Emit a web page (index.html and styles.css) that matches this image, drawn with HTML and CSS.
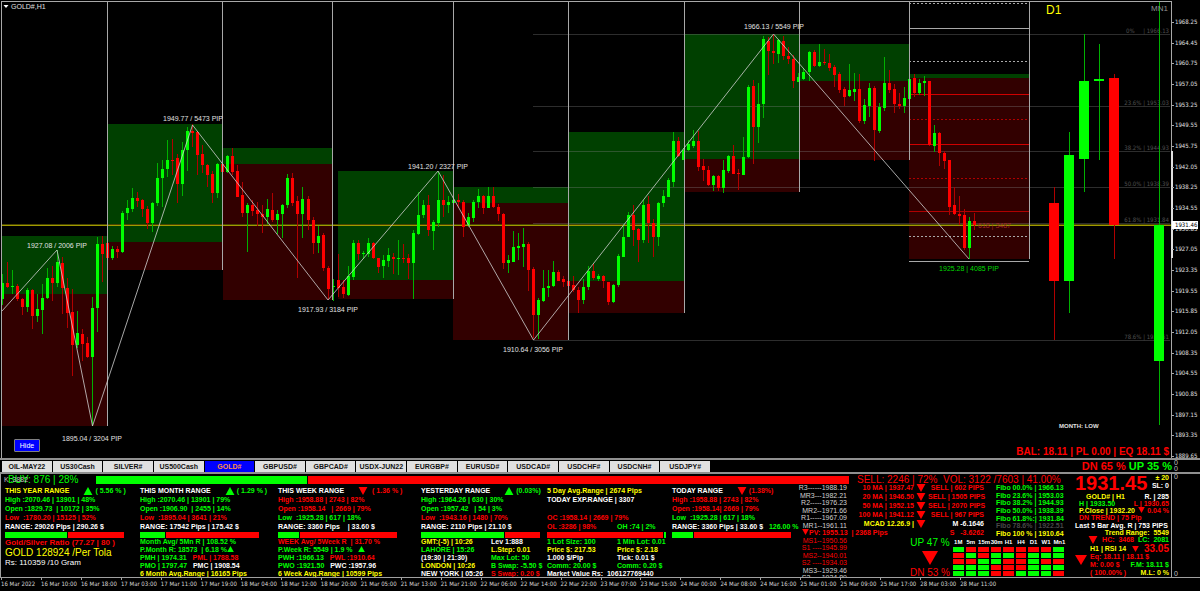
FILE: index.html
```html
<!DOCTYPE html>
<html lang="en">
<head>
<meta charset="UTF-8">
<meta name="viewport" content="width=device-width, initial-scale=1.0">
<title>GOLD#,H1</title>
<link rel="stylesheet" href="styles.css">
</head>
<body>

<main class="chart">
    <svg id="chart" class="chart-svg" viewBox="0 0 1200 458" role="img" aria-label="GOLD# H1 chart"></svg>
    <button type="button" class="hide-btn">Hide</button>
</main>

<nav class="tabbar">
    <div class="tabs">
        <button type="button">OIL-MAY22</button>
        <button type="button">US30Cash</button>
        <button type="button">SILVER#</button>
        <button type="button">US500Cash</button>
        <button type="button" class="active">GOLD#</button>
        <button type="button">GBPUSD#</button>
        <button type="button">GBPCAD#</button>
        <button type="button">USDX-JUN22</button>
        <button type="button">EURGBP#</button>
        <button type="button">EURUSD#</button>
        <button type="button">USDCAD#</button>
        <button type="button">USDCHF#</button>
        <button type="button">USDCNH#</button>
        <button type="button">USDJPY#</button>
    </div>
    <div class="trend"><span class="r">DN 65 %</span> <span class="g">UP 35 %</span></div>
    <div class="scale"><span>0</span><span>0</span></div>
</nav>

<section class="panel">
    <div class="stats">
        <div class="volume">
            <span class="buy g">BUY: 876 | 28%<small>K :3882</small></span>
            <div class="bar"><i class="up" style="width:28%"></i><i class="down"></i></div>
            <span class="sell r">SELL: 2246 | 72%&nbsp; VOL: 3122 /7603 | 41.00%</span>
        </div>
        <div class="columns">
            <div class="col">
                <div class="title y">THIS YEAR RANGE <svg class="tri" viewBox="0 0 10 9"><path d="M5 0L10 9H0z"/></svg><span class="g">( 5.56 % )</span></div>
                <div class="g">High :2070.46 | 13901 | 48%</div>
                <div class="g">Open :1829.73 &nbsp;| 10172 | 35%</div>
                <div class="r">Low &nbsp;:1780.20 | 15125 | 52%</div>
                <div class="w">RANGE: 29026 Pips | 290.26 $</div>
                <div class="bar"><i class="up" style="width:52%"></i><i class="down"></i></div>
                <div class="ratio r">Gold/Silver Ratio (77.27 | 80 )</div>
                <div class="tola y">GOLD 128924 /Per Tola</div>
                <div class="gram w">Rs: 110359 /10 Gram</div>
            </div>
            <div class="col">
                <div class="title w">THIS MONTH RANGE <svg class="tri" viewBox="0 0 10 9"><path d="M5 0L10 9H0z"/></svg><span class="g">( 1.29 % )</span></div>
                <div class="g">High :2070.46 | 13901 | 79%</div>
                <div class="g">Open :1906.90 &nbsp;| 2455 | 14%</div>
                <div class="r">Low &nbsp;:1895.04 | 3641 | 21%</div>
                <div class="w">RANGE: 17542 Pips | 175.42 $</div>
                <div class="bar"><i class="up" style="width:21%"></i><i class="down"></i></div>
                <div class="lines">
                    <div class="g">Month Avg/ 5Mn R | 108.52 %</div>
                    <div class="g">P.Month R: 18573 &nbsp;| 6.18 %<svg class="tri small" viewBox="0 0 10 9"><path d="M5 0L10 9H0z"/></svg></div>
                    <div class="g">PMH | 1974.31 &nbsp;&nbsp;<span class="r">PML | 1788.58</span></div>
                    <div class="g">PMO | 1797.47 &nbsp;&nbsp;<span class="w">PMC | 1908.54</span></div>
                    <div class="y">6 Month Avg.Range | 16165 Pips</div>
                </div>
            </div>
            <div class="col">
                <div class="title w">THIS WEEK RANGE <svg class="tri dn" viewBox="0 0 10 9"><path d="M0 0H10L5 9z"/></svg><span class="r">&nbsp;( 1.36 % )</span></div>
                <div class="r">High :1958.88 | 2743 | 82%</div>
                <div class="r">Open :1958.14 &nbsp;&nbsp;| 2669 | 79%</div>
                <div class="g">Low &nbsp;:1925.28 | 617 | 18%</div>
                <div class="w">RANGE: 3360 Pips &nbsp;&nbsp;&nbsp;| 33.60 $</div>
                <div class="bar"><i class="up" style="width:18%"></i><i class="down"></i></div>
                <div class="lines">
                    <div class="r">WEEK Avg/ 5Week R &nbsp;| 31.70 %</div>
                    <div class="g">P.Week R: 5549 | 1.9 % &nbsp;&nbsp;<svg class="tri small" viewBox="0 0 10 9"><path d="M5 0L10 9H0z"/></svg></div>
                    <div class="g">PWH :1966.13 &nbsp;&nbsp;<span class="r">PWL :1910.64</span></div>
                    <div class="g">PWO :1921.50 &nbsp;&nbsp;<span class="w">PWC :1957.96</span></div>
                    <div class="y">6 Week Avg.Range | 10599 Pips</div>
                </div>
            </div>
            <div class="col">
                <div class="title w">YESTERDAY RANGE <svg class="tri" viewBox="0 0 10 9"><path d="M5 0L10 9H0z"/></svg><span class="g">(0.03%)</span></div>
                <div class="g">High :1964.26 | 630 | 30%</div>
                <div class="g">Open :1957.42 &nbsp;&nbsp;| 54 | 3%</div>
                <div class="r">Low &nbsp;:1943.16 | 1480 | 70%</div>
                <div class="w">RANGE: 2110 Pips | 21.10 $</div>
                <div class="bar"><i class="up" style="width:70%"></i><i class="down"></i></div>
                <div class="lines split">
                    <div><span class="y">GMT:(-5) | 10:26</span><span class="w">Lev 1:888</span></div>
                    <div><span class="g">LAHORE | 15:26</span><span class="y">L.Step: 0.01</span></div>
                    <div><span class="w">(19:30 | 21:30)</span><span class="g">Max Lot: 50</span></div>
                    <div><span class="y">LONDON | 10:26</span><span class="g">B Swap: -5.50 $</span></div>
                    <div><span class="w">NEW YORK | 05:26</span><span class="r">S Swap: 0.20 $</span></div>
                </div>
            </div>
            <div class="col">
                <div class="y">5 Day Avg.Range | 2674 Pips</div>
                <div class="w">TODAY EXP.RANGE | 3307</div>
                <div>&nbsp;</div>
                <div class="r">OC :1958.14 | 2669 | 79%</div>
                <div class="pair"><span class="r">OL :3286 | 98%</span><span class="g">OH :74 | 2%</span></div>
                <div class="bar"><i class="down"></i><i class="up" style="width:2%"></i></div>
                <div class="lines split">
                    <div><span class="g">1 Lot Size: 100</span><span class="g">1 Min Lot: 0.01</span></div>
                    <div><span class="y">Price $: 217.53</span><span class="y">Price $: 2.18</span></div>
                    <div><span class="w">1.000 $/Pip</span><span class="w">Tick: 0.01 $</span></div>
                    <div><span class="g">Comm: 20.00 $</span><span class="g">Comm: 0.20 $</span></div>
                    <div class="w">Market Value Rs: &nbsp;106127769440</div>
                </div>
            </div>
            <div class="col">
                <div class="title w">TODAY RANGE <svg class="tri dn" viewBox="0 0 10 9"><path d="M0 0H10L5 9z"/></svg><span class="r">(1.38%)</span></div>
                <div class="r">High :1958.88 | 2743 | 82%</div>
                <div class="r">Open :1958.14| 2669 | 79%</div>
                <div class="g">Low &nbsp;:1925.28 | 617 | 18%</div>
                <div class="w">RANGE: 3360 Pips | 33.60 $ &nbsp;&nbsp;<span class="g">126.00 %</span></div>
                <div class="bar"><i class="up" style="width:18%"></i><i class="down"></i></div>
            </div>
            <div class="pivots">
                <div>R3------1988.19</div>
                <div>MR3---1982.21</div>
                <div>R2-----1976.23</div>
                <div>MR2--1971.66</div>
                <div>R1-----1967.09</div>
                <div>MR1--1961.11</div>
                <div class="pv"><svg class="tri dn small" viewBox="0 0 10 9"><path d="M0 0H10L5 9z"/></svg>PV: 1955.13 &nbsp;| 2368 Pips</div>
                <div class="r">MS1--1950.56</div>
                <div class="r">S1 ----1945.99</div>
                <div class="r">MS2--1940.01</div>
                <div class="r">S2 ----1934.03</div>
                <div>MS3--1929.46</div>
                <div>S3 ----1924.89</div>
            </div>
            <div class="signals">
                <div class="averages">
                    <div class="ma">
                        <span>10 MA | 1937.47</span><svg class="tri dn" viewBox="0 0 10 9"><path d="M0 0H10L5 9z"/></svg><span>SELL | 602 PIPS</span>
                        <span>20 MA | 1946.50</span><svg class="tri dn" viewBox="0 0 10 9"><path d="M0 0H10L5 9z"/></svg><span>SELL | 1505 PIPS</span>
                        <span>50 MA | 1952.15</span><svg class="tri dn" viewBox="0 0 10 9"><path d="M0 0H10L5 9z"/></svg><span>SELL | 2070 PIPS</span>
                        <span>100 MA | 1941.12</span><svg class="tri dn" viewBox="0 0 10 9"><path d="M0 0H10L5 9z"/></svg><span>SELL | 967 PIPS</span>
                        <span class="y">MCAD 12.26.9 |</span><svg class="tri dn" viewBox="0 0 10 9"><path d="M0 0H10L5 9z"/></svg><span class="w">M -6.1646</span>
                        <span></span><span></span><span>S &nbsp;&nbsp;-3.6262</span>
                    </div>
                    <div class="fibo">
                        <div>Fibo 00.0% | 1966.13</div>
                        <div>Fibo 23.6% | 1953.03</div>
                        <div>Fibo 38.2% | 1944.93</div>
                        <div>Fibo 50.0% | 1938.39</div>
                        <div>Fibo 61.8%:| 1931.84</div>
                        <div class="dim">Fibo 78.6% | 1922.51</div>
                        <div class="y">Fibo 100 % | 1910.64</div>
                    </div>
                </div>
                <div class="strength">
                    <div class="updn">
                        <span class="g">UP 47 %</span>
                        <svg class="tri dn large" viewBox="0 0 16 14"><path d="M0 0H16L8 14z"/></svg>
                        <span class="r">DN 53 %</span>
                    </div>
                    <table class="heat">
                        <thead><tr><th>1M</th><th>5m</th><th>15m</th><th>30m</th><th>H1</th><th>H4</th><th>D1</th><th>W1</th><th>Mn1</th></tr></thead>
                        <tbody id="heat"></tbody>
                    </table>
                </div>
            </div>
        </div>
    </div>
    <aside class="quote">
        <div class="price"><strong>1931.45</strong><div><span class="y">&#177; 20</span><span class="w">SL: 0</span></div></div>
        <div class="rows">
            <div class="w"><span class="y in2">GOLD# | H1</span><span>R. | 285</span></div>
            <div><span class="g in1">H | 1933.50</span><span class="r">L | 1930.65</span></div>
            <div><span class="y in1">P.Close | 1932.20</span><svg class="tri dn small" viewBox="0 0 10 9"><path d="M0 0H10L5 9z"/></svg><span class="r">0.04 %</span></div>
            <div><span class="r in1">DN TREND | 75 Pip</span></div>
            <div><span class="w">Last 5 Bar Avg. R | 753 PIPS</span></div>
            <div class="end"><span class="y">Trend Range: &nbsp;5549</span></div>
            <div class="end"><svg class="tri dn" viewBox="0 0 10 9"><path d="M0 0H10L5 9z"/></svg><span class="r">HC: &nbsp;3468 &nbsp;</span><span class="g">LC: &nbsp;2081</span></div>
        </div>
        <div class="account">
            <svg class="tri dn wide" viewBox="0 0 12 10"><path d="M0 0H12L6 10z"/></svg>
            <div class="rsi"><span class="y">H1 | RSI 14</span><svg class="tri dn small" viewBox="0 0 10 9"><path d="M0 0H10L5 9z"/></svg><b class="r">33.05</b></div>
            <div class="r">Eq: 18.11 | 18.11 $</div>
            <div><span class="r">M: 0.00 $</span><span class="g">F.M: 18.11 $</span></div>
            <div><span class="r">( 100.00% )</span><span class="y">M.L: 0 %</span></div>
        </div>
    </aside>
    <div class="scale"><span>0</span><span>0</span></div>
</section>

<footer class="timeline" id="timeline"></footer>

<script src="script.js"></script>
</body>
</html>
```
FILE: styles.css
```css
body {
    margin: 0;
    background-color: #000;
    color: #fff;
    font-family: "Liberation Sans", Arial, sans-serif;
    font-size: 7px;
    font-weight: bold;
    overflow-x: hidden;
}
.g { color: #00ff00; }
.r { color: #ff0000; }
.y { color: #ffff00; }
.w { color: #fff; }
.dim { color: #404040; }

/* Chart */
.chart {
    position: relative;
}
.chart-svg {
    display: block;
    width: 100%;
    height: auto;
}
.chart-svg text {
    font-size: 7px;
    font-weight: normal;
    fill: #e0e0e0;
}
.chart-svg .axis {
    font-family: "DejaVu Sans Condensed", "DejaVu Sans", sans-serif;
    font-size: 6px;
}
.chart-svg .fib {
    fill: #505050;
}
.chart-svg .low {
    fill: #00d800;
}
.chart-svg .target {
    fill: #a02828;
}
.chart-svg .month {
    font-size: 6px;
    font-weight: bold;
}
.chart-svg .current {
    fill: #000;
}
.chart-svg .day {
    font-size: 12px;
    fill: #ffff00;
}
.chart-svg .mn {
    font-size: 8px;
    fill: #909090;
}
.chart-svg .balance {
    font-size: 10px;
    font-weight: bold;
    fill: #ff0000;
}
.hide-btn {
    position: absolute;
    left: 14px;
    bottom: 6px;
    width: 26px;
    height: 13px;
    padding: 0;
    border: 1px solid #808080;
    border-radius: 1px;
    background-color: #0000ff;
    color: #fff;
    font: 7px "Liberation Sans", Arial, sans-serif;
}

/* Symbol tabs */
.tabbar {
    display: flex;
    align-items: center;
    height: 12px;
    border-top: 2px solid #909090;
    border-bottom: 2px solid #909090;
}
.tabs {
    display: flex;
    flex: 0 0 59%;
    gap: 1px;
    margin-left: 2px;
}
.tabs button {
    flex: 1 1 0;
    min-width: 0;
    height: 11px;
    padding: 0;
    border: 0;
    background-color: #e0e0e0;
    color: #111;
    font: bold 7px "Liberation Sans", Arial, sans-serif;
}
.tabs .active {
    background-color: #0000ff;
    color: #ff9040;
}
.trend {
    flex: 1;
    text-align: right;
    font-size: 11px;
    line-height: 12px;
    white-space: nowrap;
}
.scale {
    display: flex;
    flex-direction: column;
    justify-content: space-between;
    flex: 0 0 26px;
    padding-left: 2px;
    line-height: 6px;
    font-weight: normal;
    color: #c0c0c0;
}

/* Info panel */
.panel {
    display: flex;
    height: 103px;
    border-bottom: 1px solid #a0a0a0;
    line-height: 9px;
    white-space: nowrap;
    overflow: hidden;
}
.stats {
    flex: 1;
    min-width: 0;
    display: flex;
    flex-direction: column;
    border-left: 1px solid #a0a0a0;
}
.volume {
    display: flex;
    align-items: center;
    height: 12px;
    font-size: 10px;
    font-weight: normal;
    line-height: 10px;
}
.buy {
    position: relative;
    flex: 0 0 88px;
    padding-left: 7px;
}
.buy small {
    position: absolute;
    left: 3px;
    top: 0;
    font-size: 7px;
    color: #c0c0c0;
}
.volume .bar {
    flex: 1;
    width: auto;
    height: 8px;
    margin: 0;
}
.sell {
    flex: 0 0 218px;
    padding-left: 8px;
}
.bar {
    display: flex;
    gap: 1px;
    width: 119px;
    height: 6px;
    margin-top: 1px;
}
.bar .up {
    background-color: #00ff00;
}
.bar .down {
    flex: 1;
    background-color: #ff0000;
}
.columns {
    flex: 1;
    min-height: 0;
    display: grid;
    grid-template-columns: 135fr 138fr 143fr 126fr 125fr 130fr 48fr 220fr;
    padding: 0 5px 0 4px;
}
.col {
    display: flex;
    flex-direction: column;
    min-width: 0;
}
.title {
    display: flex;
    align-items: center;
}
.title .tri {
    margin: 0 2px 0 14px;
}
.tri {
    width: 10px;
    height: 8px;
    fill: #00ff00;
}
.tri.dn { fill: #ff0000; }
.tri.small {
    width: 7px;
    height: 6px;
}
.tri.wide {
    width: 12px;
    height: 10px;
}
.tri.large {
    width: 16px;
    height: 14px;
}
.ratio {
    font-size: 8px;
}
.tola {
    font-size: 10px;
    font-weight: normal;
    line-height: 11px;
}
.gram {
    font-size: 8px;
    font-weight: normal;
}
.lines {
    flex: 1;
    display: flex;
    flex-direction: column;
    justify-content: space-between;
    line-height: 8px;
}
.lines.split > div,
.pair {
    display: flex;
}
.lines.split span:first-child,
.pair span:first-child {
    flex: 0 0 70px;
}
.pivots {
    display: flex;
    flex-direction: column;
    justify-content: space-between;
    align-items: flex-end;
    min-width: 0;
    margin: -2px 3px -3px 0;
    line-height: 7px;
    font-weight: normal;
    color: #d0d0d0;
}
.pivots .pv {
    align-self: flex-start;
    width: 0;
    font-weight: bold;
    color: #ff0000;
}

/* Moving averages, fibo levels, timeframe strength */
.signals {
    display: flex;
    flex-direction: column;
    justify-content: space-between;
    margin-top: -2px;
}
.averages {
    display: flex;
    justify-content: space-between;
    padding-right: 6px;
}
.ma {
    display: grid;
    grid-template-columns: 64px 10px 56px;
    column-gap: 2px;
    grid-auto-rows: 8px;
    row-gap: 1px;
    align-items: center;
    text-align: right;
    line-height: 8px;
    color: #ff0000;
}
.fibo {
    display: flex;
    flex-direction: column;
    justify-content: space-between;
    line-height: 7px;
    color: #00ff00;
}
.fibo .dim { color: #484848; }
.fibo .y { color: #ffff00; }
.strength {
    display: flex;
    justify-content: flex-end;
    gap: 1px;
    padding: 0 4px 1px 0;
}
.updn {
    display: flex;
    flex-direction: column;
    align-items: center;
    justify-content: space-between;
    font-size: 10px;
    font-weight: normal;
}
.heat {
    border-collapse: separate;
    border-spacing: 2px 1px;
    table-layout: fixed;
    width: 115px;
}
.heat th {
    padding: 0;
    font-size: 6px;
    line-height: 7px;
    overflow: visible;
}
.heat td {
    height: 5px;
    padding: 0;
    background-color: #ff0000;
}
.heat td.up {
    background-color: #00ff00;
}

/* Quote block */
.quote {
    flex: 0 0 94px;
    display: flex;
    flex-direction: column;
    justify-content: space-between;
    padding-right: 2px;
    border-right: 1px solid #a0a0a0;
}
.price {
    display: flex;
    justify-content: space-between;
    color: #ff0000;
}
.price strong {
    font-size: 20px;
    line-height: 18px;
}
.price div {
    display: flex;
    flex-direction: column;
    align-items: flex-end;
    line-height: 8px;
}
.rows {
    display: flex;
    flex-direction: column;
    justify-content: space-between;
    height: 51px;
}
.rows div,
.account div {
    display: flex;
    justify-content: space-between;
    line-height: 7px;
}
.rows .end {
    justify-content: flex-end;
}
.rows .end .tri {
    margin-right: 4px;
}
.in1 { padding-left: 4px; }
.in2 { padding-left: 11px; }
.account {
    position: relative;
    padding-left: 15px;
}
.account div {
    line-height: 8px;
}
.account .rsi {
    align-items: center;
}
.account b {
    font-size: 10px;
}
.account .wide {
    position: absolute;
    left: 0;
    bottom: 12px;
}

/* Time axis */
.timeline {
    display: grid;
    grid-template-columns: repeat(30, minmax(0, 1fr));
    height: 13px;
    padding-left: 1px;
    overflow: hidden;
    font-family: "DejaVu Sans Condensed", "DejaVu Sans", sans-serif;
    font-size: 6px;
    font-weight: normal;
    line-height: 8px;
    color: #d8d8d8;
    white-space: nowrap;
}
.timeline span::before {
    content: "";
    display: block;
    width: 1px;
    height: 2px;
    background-color: #a0a0a0;
}
```
FILE: script.js
```js
const NS = 'http://www.w3.org/2000/svg';
const chart = document.getElementById('chart');

const UP = '#00ff00';
const DOWN = '#ff0000';
const LINE = '#a8a8a8';

function add(tag, attrs, text) {
    const el = document.createElementNS(NS, tag);
    for (const key in attrs) el.setAttribute(key, attrs[key]);
    if (text) el.textContent = text;
    chart.appendChild(el);
}

function rect(x, y, w, h, fill) {
    add('rect', { x, y, width: w, height: h, fill });
}

function label(x, y, text, cls, anchor) {
    add('text', { x, y, class: cls || '', 'text-anchor': anchor || 'start' }, text);
}

// daily ranges: left, right, high, open, low
const days = [
    [2, 107, 236, 294, 426], [108, 222, 124, 242, 270], [223, 332, 148, 164, 300],
    [338, 453, 171, 280, 299], [453, 568, 187, 203, 340], [569, 684, 132, 281, 313],
    [684, 799, 34, 159, 192], [799, 909, 44, 81, 160], [909, 1029, 74, 78, 259]
];
days.forEach(([x1, x2, top, mid, bottom]) => {
    rect(x1, top, x2 - x1, mid - top, '#004000');
    rect(x1, mid, x2 - x1, bottom - mid, '#320000');
});

// fibo levels
const fibs = [
    [34, '0%\u00a0\u00a0\u00a0\u00a0\u00a0| 1966.13'], [106, '23.6% | 1953.03'], [151, '38.2% | 1944.93'],
    [187, '50.0% | 1938.39'], [223, '61.8% | 1931.84'], [340, '78.6% | 1922.51']
];
fibs.forEach(([y, text]) => {
    add('rect', { x: 533, y, width: 637, height: 1, fill: '#808080', 'fill-opacity': 0.35 });
    label(1169, y - 1, text, 'axis fib', 'end');
});

// pivot levels of the last day: y, colour, dashed
const levels = [
    [3, LINE, 1], [28, LINE, 0], [61, LINE, 1], [94, '#d00000', 0], [119, '#b00000', 1],
    [144, '#d00000', 0], [178, '#b00000', 1], [211, '#b00000', 0], [236, LINE, 1], [261, LINE, 0]
];
levels.forEach(([y, stroke, dashed]) => {
    add('path', { d: `M909 ${y + 0.5}H1029`, stroke, 'stroke-dasharray': dashed ? '2 2' : 'none' });
});

rect(2, 224, 1169, 1, '#4a4600');
rect(2, 225, 1169, 1, '#a09a00');

// candles: high, low, body top, body bottom, up
const candles = [
    [274,305,283,299,1],[262,288,283,287,0],[270,294,286,287,1],[284,301,286,299,0],[298,315,299,307,0],
    [288,312,290,307,1],[289,329,290,316,0],[294,322,309,316,1],[284,334,298,310,1],[268,299,278,298,1],
    [266,301,278,283,0],[250,287,262,283,1],[257,314,263,288,0],[278,328,288,313,0],[289,376,312,345,0],
    [311,348,333,345,1],[329,361,334,344,0],[337,358,343,357,0],[297,426,308,357,1],[237,332,244,308,1],
    [236,282,244,254,0],[242,258,243,258,0],[246,260,249,258,1],[246,258,249,252,0],[211,253,213,252,1],
    [200,220,208,213,1],[188,212,198,209,1],[192,207,198,201,0],[199,217,200,209,0],[206,229,209,223,0],
    [202,232,203,223,1],[163,206,178,203,1],[160,207,169,178,1],[140,177,160,169,1],[139,175,160,161,0],
    [154,203,158,184,0],[142,196,150,184,1],[127,171,131,150,1],[124,147,131,133,0],[131,175,132,155,0],
    [145,173,154,165,0],[164,187,165,175,0],[171,203,174,193,0],[163,198,164,193,1],[163,177,164,172,0],
    [155,173,156,172,1],[148,175,156,172,0],[165,197,171,197,0],[182,217,195,213,0],[203,252,205,213,1],
    [200,216,205,211,0],[202,226,210,214,0],[205,233,214,217,0],[199,224,209,217,1],[193,222,210,220,0],
    [210,234,214,220,1],[204,238,205,214,1],[174,208,178,205,1],[173,206,178,203,0],[196,278,201,214,0],
    [187,238,199,214,1],[196,230,199,220,0],[217,254,220,243,0],[226,253,236,243,1],[233,271,235,268,0],
    [266,299,268,289,0],[279,301,286,287,1],[254,297,280,288,0],[280,298,287,294,0],[266,296,276,295,1],
    [240,280,243,277,1],[240,260,243,254,0],[251,259,253,254,1],[238,257,243,254,1],[242,259,243,258,0],
    [258,273,258,267,0],[255,278,260,266,1],[248,267,255,261,1],[253,274,257,259,0],[240,275,258,259,1],
    [244,263,258,259,0],[254,279,258,263,0],[230,299,233,263,1],[192,235,215,234,1],[200,218,205,215,1],
    [195,236,205,230,0],[220,250,222,231,1],[172,227,200,223,1],[175,217,200,205,0],[196,213,202,205,1],
    [198,203,200,203,1],[194,208,200,202,0],[200,237,202,227,0],[213,227,217,225,1],[200,222,202,218,1],
    [189,208,196,202,1],[195,214,196,208,0],[187,208,196,208,1],[187,208,196,207,0],[204,221,207,214,0],
    [213,269,214,263,0],[255,273,260,263,1],[231,262,247,262,1],[233,260,246,248,1],[228,267,244,247,1],
    [242,291,244,270,0],[267,338,269,315,0],[298,339,300,315,1],[270,302,288,301,1],[270,297,286,288,1],
    [261,287,272,286,1],[270,281,272,281,0],[276,287,279,282,0],[279,289,281,286,0],[276,292,285,290,0],
    [287,313,290,300,0],[279,304,287,300,1],[266,290,271,287,1],[264,280,271,278,0],[274,281,276,279,1],
    [275,288,276,281,0],[282,305,282,302,0],[284,303,285,302,1],[254,287,256,285,1],[224,257,237,257,1],
    [212,237,215,237,1],[205,246,215,230,0],[228,262,229,240,0],[200,243,205,240,1],[196,243,204,223,0],
    [219,257,223,237,0],[202,246,203,237,1],[190,207,196,203,1],[178,197,180,197,1],[132,187,141,182,1],
    [137,157,141,156,0],[148,160,150,160,1],[140,151,144,150,1],[130,148,141,146,1],[131,171,141,167,0],
    [159,181,166,170,0],[166,186,170,185,0],[175,191,176,185,1],[175,191,176,188,0],[160,193,170,188,1],
    [155,173,156,171,1],[145,174,156,174,0],[169,190,173,174,0],[137,175,157,175,1],[85,158,87,157,1],
    [80,164,86,127,0],[83,143,104,127,1],[36,118,39,104,1],[37,75,41,51,0],[34,64,51,53,0],
    [39,63,40,54,1],[36,60,41,56,0],[47,64,56,59,0],[55,88,59,81,0],[73,82,77,82,1],
    [68,80,72,79,1],[51,81,52,72,1],[50,67,52,66,0],[44,67,62,66,1],[49,65,62,63,0],
    [54,71,63,68,0],[65,87,67,75,0],[72,93,74,90,0],[87,106,89,97,0],[64,97,90,96,1],
    [73,101,89,92,1],[74,123,89,121,0],[99,124,105,121,1],[83,117,88,106,1],[86,161,88,130,0],
    [103,133,107,131,1],[57,111,83,108,1],[70,93,83,90,0],[84,113,89,104,0],[93,109,104,106,0],
    [87,113,98,106,1],[78,99,79,99,1],[74,97,78,93,0],[79,95,83,93,1],[76,96,81,83,1],
    [81,146,81,145,0],[125,152,133,146,1],[132,166,133,153,0],[151,169,153,161,0],[160,215,160,207,0],
    [187,215,205,214,0],[196,225,214,216,0],[209,250,215,248,0],[217,259,221,248,1],[213,230,221,225,0]
];
candles.forEach(([high, low, top, bottom, up], i) => {
    const x = Math.floor(2.4 + i * 5.01);
    rect(x, high, 1, low - high, up ? '#00b000' : '#b00000');
    rect(x - 1, top, 3, Math.max(bottom - top, 1), up ? UP : DOWN);
});

// day separators
days.forEach(([, x, , , bottom]) => rect(x, 2, 1, bottom - 2, LINE));

// zigzag
add('polyline', {
    points: '2,311 57,250 92.5,426 192.5,125 328,300 438,171 533.5,340 773.5,34 969,259',
    fill: 'none', stroke: '#d0d0d0', 'stroke-width': 0.8
});

// D1 and MN1 candles on the right
const big = [
    [1049, 187, 340, 203, 281, 0], [1064, 132, 313, 155, 281, 1], [1079, 34, 192, 81, 159, 1],
    [1094, 44, 160, 79, 81, 1], [1109, 74, 259, 78, 225, 0], [1154, 2, 425, 225, 361, 1]
];
big.forEach(([x, high, low, top, bottom, up]) => {
    rect(x + 5, high, 1, low - high, up ? '#00b000' : '#b00000');
    rect(x, top, 10, bottom - top, up ? UP : DOWN);
});

// frame and price axis
rect(1, 1, 1171, 1, LINE);
rect(1, 1, 1, 457, LINE);
rect(1171, 1, 1, 457, LINE);
rect(1171, 151, 2, 107, '#e0e0e0');
const prices = [
    '1968.25', '1964.45', '1960.75', '1957.05', '1953.25', '1949.55', '1945.75', '1942.05',
    '1938.25', '1934.55', '1930.85', '1927.05', '1923.35', '1919.55', '1915.85', '1912.05',
    '1908.35', '1904.55', '1900.85', '1897.15', '1893.35', '1889.65'
];
prices.forEach((price, i) => {
    const y = Math.round(22 + i * 20.67);
    rect(1172, y, 2, 1, LINE);
    label(1175, y + 2, price, 'axis');
});
rect(1172, 221, 26, 8, '#fff');
label(1175, 227, '1931.46', 'axis current');

add('path', { d: 'M3.500 5H8.500L6 8z', fill: '#fff' });
label(11, 9, 'GOLD#,H1');
label(57, 248, '1927.08 / 2006 PIP', '', 'middle');
label(92, 441, '1895.04 / 3204 PIP', '', 'middle');
label(193, 121, '1949.77 / 5473 PIP', '', 'middle');
label(328, 312, '1917.93 / 3184 PIP', '', 'middle');
label(438, 169, '1941.20 / 2327 PIP', '', 'middle');
label(533, 352, '1910.64 / 3056 PIP', '', 'middle');
label(774, 29, '1966.13 / 5549 PIP', '', 'middle');
label(969, 271, '1925.28 | 4085 PIP', 'low', 'middle');
label(978, 228, '618 | 3487', 'target');
label(1046, 14, 'D1', 'day');
label(1151, 11, 'MN1', 'mn');
label(1059, 428, 'MONTH: LOW', 'month');
label(1169, 455, 'BAL: 18.11 | PL 0.00 | EQ 18.11 $', 'balance', 'end');

// timeframe strength, one string per row: u = up, d = down
const strength = ['udddddddu', 'duduuduuu', 'dduuddudd', 'uuuddduuu', 'uuudduuud'];
document.getElementById('heat').innerHTML = strength.map(row =>
    '<tr>' + [...row].map(c => `<td class="${c === 'u' ? 'up' : 'down'}"></td>`).join('') + '</tr>'
).join('');

const times = [
    '16 Mar 2022', '16 Mar 10:00', '16 Mar 18:00', '17 Mar 03:00', '17 Mar 11:00', '17 Mar 19:00',
    '18 Mar 04:00', '18 Mar 12:00', '18 Mar 20:00', '21 Mar 05:00', '21 Mar 13:00', '21 Mar 21:00',
    '22 Mar 06:00', '22 Mar 14:00', '22 Mar 22:00', '23 Mar 07:00', '23 Mar 15:00', '24 Mar 00:00',
    '24 Mar 08:00', '24 Mar 16:00', '25 Mar 01:00', '25 Mar 09:00', '25 Mar 17:00', '28 Mar 03:00',
    '28 Mar 11:00'
];
document.getElementById('timeline').innerHTML = times.map(t => `<span>${t}</span>`).join('');
```
